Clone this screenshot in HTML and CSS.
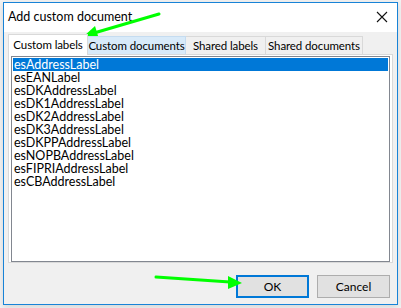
FILE: index.html
```html
<!DOCTYPE html>
<html lang="en">
<head>
<meta charset="UTF-8">
<title>Add custom document</title>
<link rel="stylesheet" href="styles.css">
</head>
<body>

<div class="window">
  <div class="titlebar">
    <span class="title">Add custom document</span>
    <svg class="close" width="12" height="12" viewBox="0 0 12 12">
      <path d="M1 1 L11 11 M11 1 L1 11" stroke="#111" stroke-width="1.1" fill="none"/>
    </svg>
  </div>

  <div class="body">
    <div class="tabs">
      <div class="tab active tab-labels">Custom labels</div>
      <div class="tab hover tab-docs">Custom documents</div>
      <div class="tab tab-shared">Shared labels</div>
      <div class="tab tab-shared-docs">Shared documents</div>
    </div>
    <div class="panel">
      <div class="listbox">
        <div class="item selected">esAddressLabel</div>
        <div class="item">esEANLabel</div>
        <div class="item">esDKAddressLabel</div>
        <div class="item">esDK1AddressLabel</div>
        <div class="item">esDK2AddressLabel</div>
        <div class="item">esDK3AddressLabel</div>
        <div class="item">esDKPPAddressLabel</div>
        <div class="item">esNOPBAddressLabel</div>
        <div class="item">esFIPRIAddressLabel</div>
        <div class="item">esCBAddressLabel</div>
      </div>
    </div>
    <div class="buttons">
      <button class="btn default">OK</button>
      <button class="btn">Cancel</button>
    </div>
  </div>

  <!-- annotation arrows drawn over the dialog -->
  <svg class="arrows" width="401" height="308" viewBox="0 0 401 308">
    <g stroke="#00ff00" stroke-width="3" stroke-linecap="round" fill="none">
      <path d="M159 14 L94 33"/>
      <path d="M156 277 L230 282"/>
    </g>
    <g fill="#00ff00">
      <path d="M83 37 L95 26 L99 39 Z"/>
      <path d="M242 283 L228 276 L228 289 Z"/>
    </g>
  </svg>
</div>

</body>
</html>
```

FILE: styles.css
```css
body {
  margin: 0;
  padding: 0;
  width: 401px;
  height: 308px;
  background-color: #f2f2f2;
  font-family: Lato, "Liberation Sans", Arial, sans-serif;
  font-size: 12px;
  color: #000;
  overflow: hidden;
}
.window {
  position: relative;
  margin: 2px 0 0 3px;
  width: 393px;
  height: 301px;
  border: 1px solid #1883d7;
  background-color: #f0f0f0;
  box-shadow: 0 2px 6px rgba(0, 0, 0, 0.12);
  display: flex;
  flex-direction: column;
}
.titlebar {
  height: 29px;
  background-color: #fff;
  display: flex;
  align-items: center;
  justify-content: space-between;
  padding: 0 9px 0 4px;
}
.title {
  font-size: 12.5px;
  margin-top: -2px;
}
.close {
  margin-top: -2px;
}
.body {
  flex: 1;
  display: flex;
  flex-direction: column;
  padding: 2px 0 0 4px;
}
.tabs {
  display: flex;
  align-items: flex-end;
  height: 20px;
  position: relative;
  z-index: 1;
}
.tab {
  height: 18px;
  line-height: 17px;
  font-size: 11.5px;
  letter-spacing: -0.1px;
  text-align: center;
  border: 1px solid #d9d9d9;
  border-bottom: none;
  border-left: none;
  background-color: #f0f0f0;
  box-sizing: border-box;
  white-space: nowrap;
}
.tab.active {
  height: 21px;
  line-height: 19px;
  background-color: #fff;
  border-left: 1px solid #d9d9d9;
  margin-bottom: -1px;
}
.tab.hover {
  background-color: #d8eaf9;
  border-color: #c5dcf0;
}
.tab-labels { width: 80px; }
.tab-docs { width: 98px; }
.tab-shared { width: 80px; }
.tab-shared-docs { width: 97px; }
.panel {
  width: 385px;
  height: 209px;
  box-sizing: border-box;
  background-color: #fff;
  border: 1px solid #d9d9d9;
  padding: 1px 2px;
}
.listbox {
  height: 206px;
  box-sizing: border-box;
  border: 1px solid #828790;
  padding: 1px 1px;
}
.item {
  height: 13px;
  line-height: 13px;
  font-size: 12.5px;
  padding-left: 1px;
  white-space: nowrap;
}
.item.selected {
  background-color: #0078d7;
  color: #fff;
}
.buttons {
  display: flex;
  justify-content: flex-end;
  gap: 8px;
  padding: 12px 7px 0 0;
}
.btn {
  width: 73px;
  height: 23px;
  box-sizing: border-box;
  font-family: Lato, "Liberation Sans", Arial, sans-serif;
  font-size: 12px;
  background-color: #e1e1e1;
  border: 1px solid #adadad;
  color: #000;
  padding: 0;
  border-radius: 0;
}
.btn.default {
  border: 2px solid #0078d7;
}
.arrows {
  position: absolute;
  left: -4px;
  top: -3px;
  pointer-events: none;
}
```
